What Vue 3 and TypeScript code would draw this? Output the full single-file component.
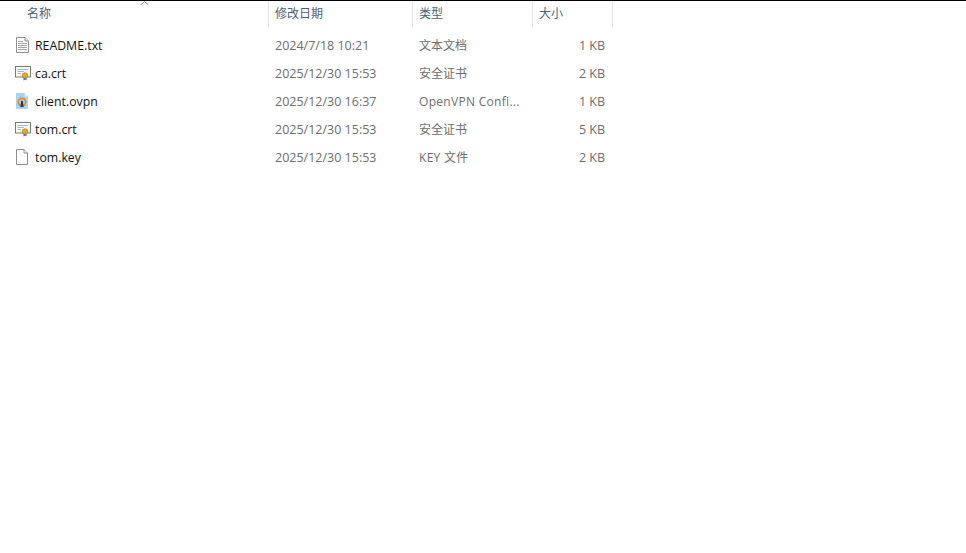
<script setup lang="ts">
interface FileRow {
  name: string
  date: string
  type: string
  size: string
  icon: 'text' | 'cert' | 'vpn' | 'blank'
}

const files: FileRow[] = [
  { name: 'README.txt', date: '2024/7/18 10:21', type: '文本文档', size: '1 KB', icon: 'text' },
  { name: 'ca.crt', date: '2025/12/30 15:53', type: '安全证书', size: '2 KB', icon: 'cert' },
  { name: 'client.ovpn', date: '2025/12/30 16:37', type: 'OpenVPN Confi...', size: '1 KB', icon: 'vpn' },
  { name: 'tom.crt', date: '2025/12/30 15:53', type: '安全证书', size: '5 KB', icon: 'cert' },
  { name: 'tom.key', date: '2025/12/30 15:53', type: 'KEY 文件', size: '2 KB', icon: 'blank' },
]

// 带英文的类型名字宽略大
const isLatin = (text: string) => /^[A-Z]/.test(text)
</script>

<template>
  <div class="explorer">
    <div class="header">
      <div class="col col-name">
        名称
        <svg class="sort" width="9" height="4" viewBox="0 0 9 4">
          <path d="M0.5 4 L4.5 0.5 L8.5 4" fill="none" stroke="#8a8a8a" stroke-width="1" />
        </svg>
      </div>
      <div class="col">修改日期</div>
      <div class="col">类型</div>
      <div class="col">大小</div>
    </div>

    <div class="rows">
      <div v-for="file in files" :key="file.name" class="row">
        <div class="cell name-cell">
          <svg v-if="file.icon === 'text'" class="icon" width="16" height="16" viewBox="0 0 16 16">
            <path d="M1.5 .5 H10 L13.5 4 V15.5 H1.5 Z" fill="#fff" stroke="#8f8f8f" />
            <path d="M10 .5 V4 H13.5" fill="#eee" stroke="#8f8f8f" />
            <path d="M3 4.5 H8 M3 6.5 H12 M3 8.5 H12 M3 10.5 H12 M3 12.5 H12" stroke="#a3a3a3" />
          </svg>
          <svg v-else-if="file.icon === 'cert'" class="icon" width="16" height="16" viewBox="0 0 16 16">
            <rect x=".5" y="1.5" width="15" height="10.5" fill="#fbf9f1" stroke="#7d7a70" />
            <path d="M2.5 4.5 H13 M2.5 6.5 H9 M2.5 8.5 H6" stroke="#9dbedd" />
            <path d="M8.5 12.5 V15.5 L10 14.5 L11.5 15.5 V12.5 Z" fill="#2f6fc0" />
            <circle cx="10" cy="10.5" r="2.8" fill="#e2a62c" stroke="#b07a1a" stroke-width=".6" />
          </svg>
          <svg v-else-if="file.icon === 'vpn'" class="icon" width="16" height="16" viewBox="0 0 16 16">
            <path d="M1 0 H9.5 L13 3.5 V16 H1 Z" fill="#a9d3f3" />
            <path d="M9.5 0 V3.5 H13 Z" fill="#e6f2fb" />
            <circle cx="7" cy="9" r="3.7" fill="none" stroke="#e8891c" stroke-width="1.8" />
            <path d="M6 9.5 H8 L8.7 14 H5.3 Z" fill="#1f3f66" />
            <circle cx="7" cy="9" r="1.2" fill="#1f3f66" />
          </svg>
          <svg v-else class="icon" width="16" height="16" viewBox="0 0 16 16">
            <path d="M1.5 .5 H9 L12.5 4 V15.5 H1.5 Z" fill="#fff" stroke="#8f8f8f" />
            <path d="M9 .5 V4 H12.5" fill="#f2f2f2" stroke="#8f8f8f" />
          </svg>
          <span class="file-name">{{ file.name }}</span>
        </div>
        <div class="cell meta latin">{{ file.date }}</div>
        <div class="cell meta" :class="{ spaced: isLatin(file.type) }">{{ file.type }}</div>
        <div class="cell meta size latin">{{ file.size }}</div>
      </div>
    </div>
  </div>
</template>

<style>
html,
body {
  margin: 0;
  background: #fff;
}
</style>

<style scoped>
.explorer {
  width: 966px;
  height: 553px;
  box-sizing: border-box;
  border-top: 1px solid #000;
  background: #fff;
  overflow: hidden;
  font-family: "Open Sans", "Noto Sans CJK SC", sans-serif;
  font-size: 12px;
}

.header {
  display: grid;
  grid-template-columns: 269px 144px 120px 80px;
  height: 26px;
  width: 613px;
}

.col {
  position: relative;
  display: flex;
  align-items: center;
  padding-left: 6px;
  box-sizing: border-box;
  border-right: 1px solid #e5e5e5;
  color: #4c607a;
  line-height: 24px;
}

.col-name {
  padding-left: 27px;
}

.sort {
  position: absolute;
  left: 140px;
  top: 0;
}

.rows {
  padding-top: 4px;
}

.row {
  display: grid;
  grid-template-columns: 269px 144px 120px 72px;
  height: 28px;
  align-items: center;
}

.cell {
  white-space: nowrap;
}

.name-cell {
  display: flex;
  align-items: center;
  padding-left: 15px;
  gap: 4px;
}

.icon {
  flex: none;
}

.file-name {
  color: #111;
  font-size: 12.3px;
}

.meta {
  color: #6d6d6d;
  padding-left: 6px;
}

.latin {
  font-size: 12.5px;
}

.spaced {
  letter-spacing: 0.3px;
}

.size {
  text-align: right;
  padding-left: 0;
}
</style>
